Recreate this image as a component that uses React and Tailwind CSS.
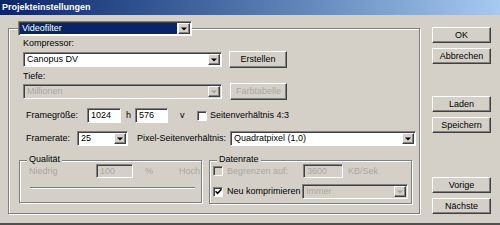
import React from "react";

const sunken =
  "border border-t-[#808080] border-l-[#808080] border-b-white border-r-white shadow-[inset_1px_1px_0_#404040]";
const raised =
  "border border-t-white border-l-white border-b-[#404040] border-r-[#404040] shadow-[inset_-1px_-1px_0_#808080]";
const etched = "border border-[#808080] shadow-[inset_1px_1px_0_#fff,1px_1px_0_#fff]";
const dim = "text-[#aaa79f]";

function Arrow({ disabled }) {
  return (
    <div
      className={`${raised} bg-[#d4d0c8] w-[12px] h-full flex items-center justify-center shrink-0`}
    >
      <svg width="6" height="4" viewBox="0 0 6 4">
        <path d="M0 0.5h6L3 3.5z" fill={disabled ? "#a0a0a0" : "#000"} />
      </svg>
    </div>
  );
}

function Combo({ className, value, disabled, selected }) {
  return (
    <div
      className={`${sunken} ${className} ${
        disabled ? "bg-[#d4d0c8]" : "bg-white"
      } flex p-[1px] shrink-0`}
    >
      <div className="flex-1 min-w-0 flex items-center pr-[1px]">
        <span
          className={`h-full flex-1 flex items-center pl-[2px] whitespace-nowrap overflow-hidden ${
            selected ? "bg-[#0a246a] text-white" : disabled ? dim : ""
          }`}
        >
          {value}
        </span>
      </div>
      <Arrow disabled={disabled} />
    </div>
  );
}

function Field({ className, value, disabled }) {
  return (
    <div
      className={`${sunken} ${className} ${
        disabled ? `bg-[#d4d0c8] ${dim}` : "bg-white"
      } flex items-center pl-[3px] shrink-0`}
    >
      {value}
    </div>
  );
}

function Btn({ className, children, disabled }) {
  return (
    <div
      className={`${raised} ${className} bg-[#d4d0c8] flex items-center justify-center shrink-0 whitespace-nowrap ${
        disabled ? dim : ""
      }`}
    >
      {children}
    </div>
  );
}

function Check({ checked, disabled }) {
  return (
    <div
      className={`${sunken} w-[10px] h-[10px] shrink-0 flex items-center justify-center ${
        disabled ? "bg-[#d4d0c8]" : "bg-white"
      }`}
    >
      {checked && (
        <svg width="7" height="7" viewBox="0 0 7 7">
          <path d="M0.5 3.2 L2.6 5.3 L6.5 1.2" stroke="#000" strokeWidth="1.6" fill="none" />
        </svg>
      )}
    </div>
  );
}

function Group({ className, label, children }) {
  return (
    <div className={`${etched} ${className} relative shrink-0`}>
      <span className="absolute -top-[7px] left-[7px] bg-[#d4d0c8] px-[2px] leading-[11px]">
        {label}
      </span>
      {children}
    </div>
  );
}

export default function App() {
  return (
    <div className="w-[500px] h-[225px] bg-[#d4d0c8] flex flex-col font-['Liberation_Sans',Arial,sans-serif] text-[9px] leading-[11px] text-black border-b-2 border-b-[#505050] overflow-hidden">
      {/* title bar */}
      <div className="h-[15px] shrink-0 bg-gradient-to-r from-[#0a246a] to-[#a6caf0] flex items-center pl-[2px]">
        <span className="text-white font-bold text-[9px]">Projekteinstellungen</span>
      </div>

      <div className="flex pl-[8px] pt-[13px]">
        {/* main group */}
        <div className={`${etched} w-[412px] h-[186px] shrink-0`}>
          <Combo className="w-[174px] h-[15px] -mt-[8px] ml-[9px]" value="Videofilter" selected />

          <div className="mt-[2px] ml-[14px] h-[11px]">Kompressor:</div>
          <div className="mt-[2px] ml-[14px] h-[17px] flex items-center">
            <Combo className="w-[199px] h-[15px]" value="Canopus DV" />
            <Btn className="ml-[7px] w-[58px] h-[17px]">Erstellen</Btn>
          </div>

          <div className="mt-[3px] ml-[14px] h-[11px]">Tiefe:</div>
          <div className="mt-[1px] ml-[14px] h-[17px] flex items-center">
            <Combo className="w-[199px] h-[15px]" value="Millionen" disabled />
            <Btn className="ml-[8px] w-[57px] h-[17px]" disabled>
              Farbtabelle
            </Btn>
          </div>

          <div className="mt-[8px] ml-[17px] h-[15px] flex items-center">
            <span className="w-[61px] shrink-0">Framegröße:</span>
            <Field className="w-[34px] h-[15px]" value="1024" />
            <span className="ml-[5px] w-[9px] shrink-0">h</span>
            <Field className="w-[33px] h-[15px]" value="576" />
            <span className="ml-[12px] w-[17px] shrink-0">v</span>
            <Check />
            <span className="ml-[3px] whitespace-nowrap">Seitenverhältnis 4:3</span>
          </div>

          <div className="mt-[8px] ml-[17px] h-[15px] flex items-center">
            <span className="w-[51px] shrink-0">Framerate:</span>
            <Combo className="w-[51px] h-[15px]" value="25" />
            <span className="ml-[9px] w-[93px] shrink-0 whitespace-nowrap">Pixel-Seitenverhältnis:</span>
            <Combo className="w-[186px] h-[15px]" value="Quadratpixel (1,0)" />
          </div>

          <div className="mt-[14px] ml-[10px] flex">
            <Group className="w-[183px] h-[43px]" label="Qualität">
              <div className={`mt-[3px] h-[14px] flex items-center ${dim}`}>
                <span className="ml-[9px] w-[67px] shrink-0">Niedrig</span>
                <Field className="w-[37px] h-[14px]" value="100" disabled />
                <span className="ml-[12px] w-[34px] shrink-0">%</span>
                <span>Hoch</span>
              </div>
              <div className="mt-[9px] ml-[10px] w-[165px] h-[2px] border-t border-t-[#808080] border-b border-b-white" />
            </Group>

            <Group className="ml-[7px] w-[203px] h-[44px]" label="Datenrate">
              <div className="mt-[3px] h-[14px] flex items-center">
                <span className="ml-[3px]">
                  <Check disabled />
                </span>
                <span className={`ml-[4px] w-[76px] shrink-0 ${dim}`}>Begrenzen auf:</span>
                <Field className="w-[40px] h-[14px]" value="3600" disabled />
                <span className={`ml-[5px] ${dim}`}>KB/Sek</span>
              </div>
              <div className="mt-[6px] h-[15px] flex items-center">
                <span className="ml-[3px]">
                  <Check checked />
                </span>
                <span className="ml-[4px] w-[75px] shrink-0 whitespace-nowrap">Neu komprimieren</span>
                <Combo className="w-[106px] h-[15px]" value="Immer" disabled />
              </div>
            </Group>
          </div>
        </div>

        {/* right buttons */}
        <div className="ml-[12px] flex flex-col -mt-[1px]">
          <Btn className="w-[59px] h-[16px]">OK</Btn>
          <Btn className="mt-[5px] w-[59px] h-[16px]">Abbrechen</Btn>
          <Btn className="mt-[32px] w-[59px] h-[16px]">Laden</Btn>
          <Btn className="mt-[5px] w-[59px] h-[16px]">Speichern</Btn>
          <Btn className="mt-[44px] w-[59px] h-[16px]">Vorige</Btn>
          <Btn className="mt-[5px] w-[59px] h-[16px]">Nächste</Btn>
        </div>
      </div>
    </div>
  );
}
